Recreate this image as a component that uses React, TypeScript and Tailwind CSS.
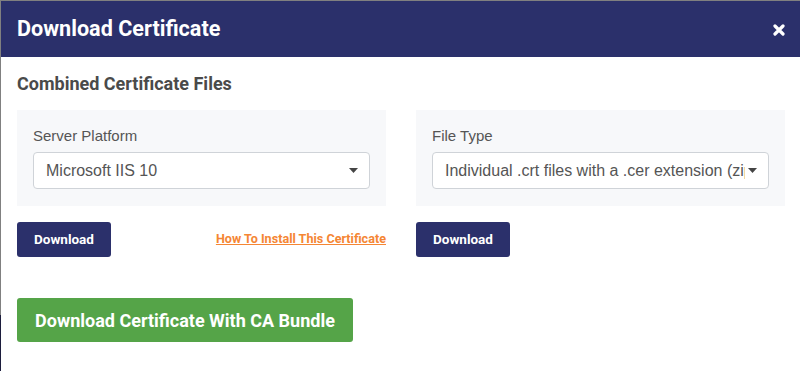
import React from "react";

function Caret() {
  return (
    <svg width="9" height="5" viewBox="0 0 9 5" className="shrink-0">
      <path d="M0 0h9L4.5 5z" fill="#444" />
    </svg>
  );
}

function SelectBox({ value }: { value: string }) {
  return (
    <div className="flex h-[37px] items-center rounded-[4px] border border-[#cfd3d8] bg-white pl-[12px] pr-[11px]">
      <span className="flex-1 overflow-hidden whitespace-nowrap text-[16px] text-[#555]">
        {value}
      </span>
      <span className="ml-[3px]">
        <Caret />
      </span>
    </div>
  );
}

function Panel({ label, value }: { label: string; value: string }) {
  return (
    <div className="bg-[#f7f8fa] px-4 pt-[16px] pb-[17px]">
      <div className="mb-[6px] h-[20px] text-[15px] leading-[20px] text-[#555]">{label}</div>
      <SelectBox value={value} />
    </div>
  );
}

function DownloadButton() {
  return (
    <button className="h-[35px] w-[94px] rounded-[3px] bg-[#2b306b] text-[13.5px] font-bold text-white [font-family:Roboto,sans-serif]">
      Download
    </button>
  );
}

export default function App() {
  return (
    <div className="flex h-[371px] w-[800px] overflow-hidden [font-family:'Liberation_Sans',Arial,sans-serif]">
      {/* overlay behind the modal */}
      <div className="flex w-px flex-col">
        <div className="h-[315px] bg-[#808080]" />
        <div className="flex-1 bg-[#1c1d3d]" />
      </div>
      <div className="flex flex-1 flex-col">
        <div className="h-px bg-[#808080]" />
        <div className="flex-1 bg-white">
          {/* Header */}
          <div className="flex h-[56px] items-center justify-between bg-[#2b306b] pl-[16px] pr-[15px] [font-family:Roboto,sans-serif]">
            <h1 className="text-[21.6px] font-bold text-white">Download Certificate</h1>
            <svg width="12" height="12" viewBox="0 0 12 12" className="mt-[2px]">
              <path d="M2 2l8 8M10 2l-8 8" stroke="white" strokeWidth="3.2" strokeLinecap="round" />
            </svg>
          </div>

          <div className="pl-[16px] pr-[14px]">
            <h2 className="mt-[17px] h-[20px] text-[18px] font-bold leading-[20px] text-[#4a4a4a] [font-family:Roboto,sans-serif]">
              Combined Certificate Files
            </h2>

            <div className="mt-[16px] grid grid-cols-[369px_369px] gap-x-[30px]">
              <Panel label="Server Platform" value="Microsoft IIS 10" />
              <Panel label="File Type" value="Individual .crt files with a .cer extension (zip)" />

              <div className="mt-[16px] flex items-center justify-between">
                <DownloadButton />
                <a
                  href="#"
                  className="text-[12.6px] font-bold text-[#f58634] underline [font-family:Roboto,sans-serif]"
                >
                  How To Install This Certificate
                </a>
              </div>
              <div className="mt-[16px]">
                <DownloadButton />
              </div>
            </div>

            <button className="mt-[41px] h-[44px] w-[336px] rounded-[3px] bg-[#55a448] text-[18px] font-bold text-white [font-family:Roboto,sans-serif]">
              Download Certificate With CA Bundle
            </button>
          </div>
        </div>
      </div>
    </div>
  );
}
